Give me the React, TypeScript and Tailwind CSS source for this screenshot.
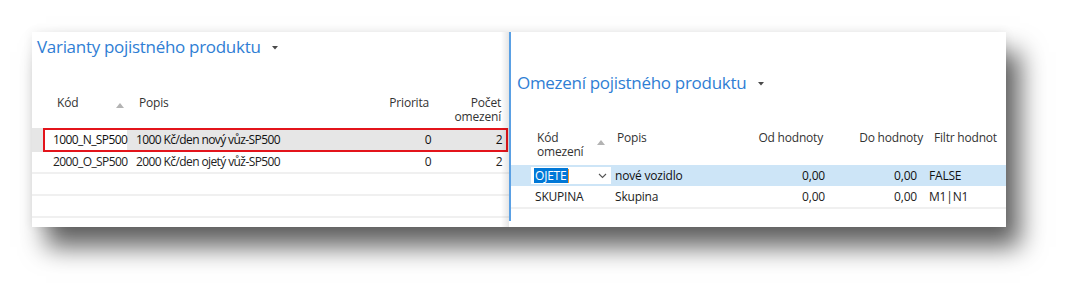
import React from "react";

const TitleCaret = () => (
  <svg width="6" height="4" viewBox="0 0 6 4" className="mt-[2px]">
    <path d="M0 0h6L3 3.5z" fill="#4a4a4a" />
  </svg>
);

const SortArrow = () => (
  <svg width="8" height="5" viewBox="0 0 8 5">
    <path d="M0 5h8L4 0z" fill="#b3b3b3" />
  </svg>
);

const LeftPane: React.FC = () => {
  return (
    <div className="relative w-[477px] flex flex-col">
      {/* Title */}
      <div className="h-[30px] flex items-center gap-[11px] pl-[5px] text-[17px] tracking-[-0.3px] text-[#2f7ed4]">
        <span>Varianty pojistného produktu</span>
        <TitleCaret />
      </div>
      <div className="h-[30px]" />

      {/* Header */}
      <div className="h-[36px] flex pl-[13px] pt-[4px] text-[12px] leading-[14px] text-[#333] tracking-[-0.2px]">
        <div className="w-[82px] flex justify-between pl-[12px] pr-[3px]">
          <span>Kód</span>
          <span className="mt-[7px]">
            <SortArrow />
          </span>
        </div>
        <div className="w-[243px] pl-[12px]">Popis</div>
        <div className="w-[63px] text-right pr-[4px]">Priorita</div>
        <div className="w-[73px] text-right pr-[5px]">
          Počet
          <br />
          omezení
        </div>
      </div>

      {/* Row 1 (selected, outlined) */}
      <div className="h-[24px] bg-[#e6e6e6] pl-[11px] pr-[1px] flex">
        <div className="flex-1 border-2 border-[#e3141b] flex items-center text-[12px] text-[#111] tracking-[-0.6px]">
          <div className="w-[82px] h-full bg-white pl-[8px] flex items-center">1000_N_SP500</div>
          <div className="w-[243px] pl-[9px]">1000 Kč/den nový vůz-SP500</div>
          <div className="w-[63px] text-right pr-[2px]">0</div>
          <div className="flex-1 text-right pr-[4px]">2</div>
        </div>
      </div>

      {/* Row 2 */}
      <div className="h-[22px] pl-[13px] pr-[3px] flex items-center border-b-2 border-[#f0f0f0] text-[12px] text-[#222] tracking-[-0.6px]">
        <div className="w-[82px] pl-[8px]">2000_O_SP500</div>
        <div className="w-[243px] pl-[9px]">2000 Kč/den ojetý vůž-SP500</div>
        <div className="w-[63px] text-right pr-[2px]">0</div>
        <div className="flex-1 text-right pr-[4px]">2</div>
      </div>

      {/* Empty rows */}
      <div className="h-[22px] border-b-2 border-[#f0f0f0]" />
      <div className="h-[22px] border-b-2 border-[#f0f0f0]" />

      {/* Edge shading next to the splitter */}
      <div className="pointer-events-none absolute right-0 top-0 bottom-0 w-[8px] bg-linear-to-r from-transparent to-black/10" />
    </div>
  );
};

const RightPane: React.FC = () => {
  return (
    <div className="w-[495px] flex flex-col">
      {/* Title */}
      <div className="mt-[36px] h-[30px] flex items-center gap-[12px] pl-[6px] text-[17px] tracking-[-0.3px] text-[#2f7ed4]">
        <span>Omezení pojistného produktu</span>
        <TitleCaret />
      </div>

      {/* Header */}
      <div className="mt-[33px] h-[34px] flex pl-[20px] text-[12px] leading-[14px] text-[#333] tracking-[-0.2px]">
        <div className="w-[80px] flex justify-between pl-[6px] pr-[6px]">
          <span>
            Kód
            <br />
            omezení
          </span>
          <span className="mt-[9px]">
            <SortArrow />
          </span>
        </div>
        <div className="w-[89px] pl-[6px]">Popis</div>
        <div className="w-[128px] text-right pr-[5px]">Od hodnoty</div>
        <div className="w-[95px] text-right">Do hodnoty</div>
        <div className="flex-1 pl-[11px] whitespace-nowrap">Filtr hodnot</div>
      </div>

      {/* Row 1 (active, editing) */}
      <div className="h-[21px] bg-[#cde5f7] pl-[20px] flex items-center text-[12px] text-[#111] tracking-[-0.2px]">
        <div className="w-[80px] h-[17px] bg-white pl-[3px] pr-[4px] flex items-center justify-between">
          <span className="flex items-center">
            <span className="bg-[#0078d7] text-white px-[1px] leading-[15px]">OJETE</span>
            <span className="w-[1px] h-[14px] bg-[#f29a2e]" />
          </span>
          <svg width="9" height="6" viewBox="0 0 9 6">
            <path d="M1 1l3.5 3.5L8 1" fill="none" stroke="#555" strokeWidth="1.1" />
          </svg>
        </div>
        <div className="w-[89px] pl-[4px] font-medium">nové vozidlo</div>
        <div className="w-[128px] text-right pr-[3px] font-medium">0,00</div>
        <div className="w-[95px] text-right pr-[6px] font-medium">0,00</div>
        <div className="flex-1 pl-[6px] font-medium">FALSE</div>
      </div>

      {/* Row 2 */}
      <div className="h-[23px] pl-[20px] flex items-center border-b-2 border-[#f0f0f0] text-[12px] text-[#222] tracking-[-0.2px]">
        <div className="w-[80px] pl-[4px]">SKUPINA</div>
        <div className="w-[89px] pl-[4px]">Skupina</div>
        <div className="w-[128px] text-right pr-[3px]">0,00</div>
        <div className="w-[95px] text-right pr-[6px]">0,00</div>
        <div className="flex-1 pl-[6px]">M1|N1</div>
      </div>
    </div>
  );
};

export default function App() {
  return (
    <div className="w-[1071px] h-[292px] bg-white pt-[32px] pl-[32px] font-['Open_Sans',sans-serif] overflow-hidden">
      <div className="flex w-[974px] h-[195px] bg-white shadow-[0_0_10px_rgba(0,0,0,0.07),14px_20px_24px_rgba(0,0,0,0.62)]">
        <LeftPane />
        <div className="w-[2px] h-[189px] bg-[#5aa0e4]" />
        <RightPane />
      </div>
    </div>
  );
}
